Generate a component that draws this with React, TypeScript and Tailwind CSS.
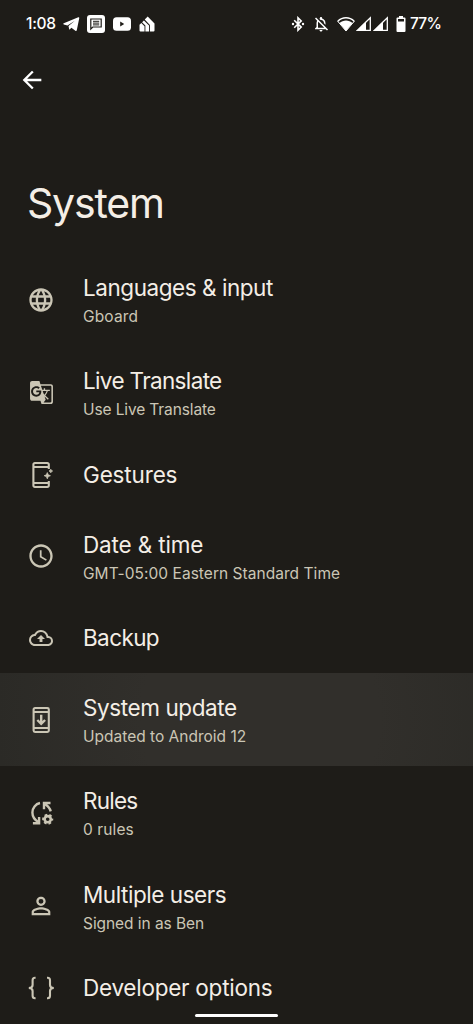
import type { ReactNode } from "react"
import {
  MdAccessTime,
  MdArrowBack,
  MdGTranslate,
  MdLanguage,
  MdOutlineBackup,
  MdOutlineNotificationsOff,
  MdPersonOutline,
} from "react-icons/md"

interface Item {
  title: string
  sub?: string
  icon: ReactNode
  active?: boolean
  titleClass?: string
  subClass?: string
}

function GesturesIcon() {
  return (
    <svg width="28" height="28" viewBox="0 0 28 28" fill="none" stroke="currentColor" strokeWidth="2.1">
      <path d="M21.8 8V3.4a1.4 1.4 0 0 0-1.4-1.4H7.8a1.4 1.4 0 0 0-1.4 1.4v21.2a1.4 1.4 0 0 0 1.4 1.4h12.6a1.4 1.4 0 0 0 1.4-1.4V20" />
      <path d="M6.5 6h15.3M6.5 22h15.3" />
      <path
        d="M20.3 11.6l.9 2.2 2.2.9-2.2.9-.9 2.2-.9-2.2-2.2-.9 2.2-.9zM23.8 8.2l.5 1.3 1.3.5-1.3.5-.5 1.3-.5-1.3-1.3-.5 1.3-.5z"
        fill="currentColor"
        strokeWidth=".8"
      />
    </svg>
  )
}

function UpdateIcon() {
  return (
    <svg width="28" height="28" viewBox="0 0 28 28" fill="none" stroke="currentColor" strokeWidth="2.1">
      <rect x="6.6" y="2" width="15.2" height="24" rx="1.4" />
      <path d="M6.5 6h15.3M6.5 22h15.3" />
      <path d="M14.2 8.8v9M10.3 14l3.9 3.9 3.9-3.9" strokeWidth="2.4" />
    </svg>
  )
}

function RulesIcon() {
  return (
    <svg width="28" height="28" viewBox="0 0 28 28" fill="none" stroke="currentColor" strokeWidth="2.4">
      <path d="M13 4C8.6 5 5.400 8.900 5.400 13.400c0 4.100 2.400 7.500 6 9.600" />
      <path d="M5.900 24.300h6.200V18" />
      <path d="M23.700 12.400c-.8-3.200-2.900-5.700-5.900-7.300" />
      <path d="M23.500 4h-6.500v6.200" />
      <circle cx="20.7" cy="20.2" r="3.1" strokeWidth="2.6" />
      <circle cx="20.7" cy="20.2" r="4.6" strokeWidth="1.9" strokeDasharray="2.6 2.217" strokeDashoffset="1.3" />
    </svg>
  )
}

function BracesIcon() {
  return (
    <svg width="28" height="28" viewBox="0 0 28 28" fill="none" stroke="currentColor" strokeWidth="2.1" className="overflow-visible">
      <path d="M8.600 3.800H8Q5.600 3.800 5.600 6.300V11Q5.600 14 1.800 14Q5.600 14 5.600 17V21.700Q5.600 24.200 8 24.200H8.600" />
      <path d="M20 3.800H20.600Q23 3.800 23 6.300V11Q23 14 26.800 14Q23 14 23 17V21.700Q23 24.200 20.600 24.200H20" />
    </svg>
  )
}

const items: Item[] = [
  {
    title: "Languages & input",
    sub: "Gboard",
    icon: <MdLanguage size={28} />,
    titleClass: "tracking-[-0.45px]",
    subClass: "tracking-[0.15px]",
  },
  {
    title: "Live Translate",
    sub: "Use Live Translate",
    icon: <MdGTranslate size={25} />,
    titleClass: "tracking-[-0.65px]",
    subClass: "tracking-[-0.12px]",
  },
  { title: "Gestures", icon: <GesturesIcon />, titleClass: "tracking-[-0.15px]" },
  {
    title: "Date & time",
    sub: "GMT-05:00 Eastern Standard Time",
    icon: <MdAccessTime size={28} />,
    titleClass: "tracking-[-0.15px]",
    subClass: "tracking-[0.04px]",
  },
  { title: "Backup", icon: <MdOutlineBackup size={24} />, titleClass: "tracking-[-0.6px]" },
  {
    title: "System update",
    sub: "Updated to Android 12",
    icon: <UpdateIcon />,
    active: true,
    titleClass: "tracking-[-0.4px]",
  },
  {
    title: "Rules",
    sub: "0 rules",
    icon: <RulesIcon />,
    titleClass: "tracking-[-0.75px]",
    subClass: "tracking-[0.1px]",
  },
  {
    title: "Multiple users",
    sub: "Signed in as Ben",
    icon: <MdPersonOutline size={28} />,
    titleClass: "tracking-[-0.45px]",
    subClass: "tracking-[-0.06px]",
  },
  { title: "Developer options", icon: <BracesIcon />, titleClass: "tracking-[-0.25px]" },
]

function Signal() {
  return (
    <svg width="16" height="16" viewBox="0 0 16 16" className="shrink-0">
      <path d="M1.5 14.3L14.3 1.8v12.5z" fill="none" stroke="white" strokeWidth="1.3" />
      <path d="M.5 15L10 5.5V15z" fill="white" />
    </svg>
  )
}

function StatusBar() {
  return (
    <div className="flex h-12 shrink-0 items-center justify-between pl-[26px] pr-[33px] text-white">
      <div className="flex items-center">
        <span className="w-[37px] whitespace-nowrap text-[15.5px] font-medium tracking-[-0.3px]">1:08</span>
        {/* telegram */}
        <svg width="17" height="18" viewBox="0 0 18 18" fill="white">
          <path d="M.8 8.300L16.200 1.900c.7-.3 1.200.1 1 .9l-2.600 12.800c-.2.800-.8 1-1.500.6l-4.200-3.100-2.200 2.100-.9-4L12.600 5.500 4.700 10.600.8 9.400c-.7-.3-.7-.8 0-1.100z" />
        </svg>
        {/* messages */}
        <svg width="18" height="18" viewBox="0 0 18 18" className="ml-[7px]">
          <rect width="18" height="18" rx="3" fill="white" />
          <path d="M3.800 14V4h10.400v8H5.800z" fill="none" stroke="#1e1c18" strokeWidth="1.200" />
          <path d="M6 6.300h6.200M6 8.100h6.200M6 9.900h6.200" stroke="#1e1c18" strokeWidth="1" />
        </svg>
        {/* youtube */}
        <svg width="18" height="18" viewBox="0 0 18 18" className="ml-[8px]">
          <rect y="2.3" width="18" height="13.4" rx="3.5" fill="white" />
          <path d="M7.200 6.600l4 2.400-4 2.400z" fill="#1e1c18" />
        </svg>
        {/* layered house */}
        <svg width="16" height="18" viewBox="0 0 16 18" className="ml-[8px]">
          <path
            d="M.5 9.800L2.300 8l3.200 3.300v5.200h-4a1 1 0 0 1-1-1zM3.100 7.200L4.900 5.400l5.100 5v6.100H6.400v-5.900zM5.700 4.600L8.700 1.500l6.800 7v7a1 1 0 0 1-1 1h-3.600V9.900z"
            fill="white"
          />
        </svg>
      </div>
      <div className="flex items-center">
        {/* bluetooth, connected */}
        <svg width="14" height="16" viewBox="0 0 14 16">
          <path d="M3.200 4.300l7 6.800L7 14.200V1.800l3.200 3.100-7 6.800" fill="none" stroke="white" strokeWidth="1.6" />
          <circle cx="2" cy="8" r="1.2" fill="white" />
          <circle cx="12" cy="8" r="1.2" fill="white" />
        </svg>
        <MdOutlineNotificationsOff size={18} className="ml-[7px]" />
        <svg width="18" height="16" viewBox="0 0 18 16" className="ml-[7px]">
          <path d="M.8 5.300C5.500.7 12.500.7 17.200 5.300" fill="none" stroke="white" strokeWidth="1.500" />
          <path d="M2.500 7.100C6 3.700 12 3.700 15.500 7.100L9 15z" fill="white" />
          <path d="M.5 5L9 15l8.500-10" fill="none" stroke="white" strokeWidth="1" />
        </svg>
        <div className="ml-[1px] flex gap-[1px]">
          <Signal />
          <Signal />
        </div>
        <svg width="10" height="16" viewBox="0 0 10 16" className="ml-[7px]">
          <path d="M3 0h4v1.500h1.500a1 1 0 0 1 1 1V15a1 1 0 0 1-1 1h-7a1 1 0 0 1-1-1V2.500a1 1 0 0 1 1-1H3z" fill="white" />
          <path d="M2 3h6v2.500H2z" fill="#1e1c18" />
        </svg>
        <span className="ml-[4px] w-[30px] whitespace-nowrap text-[15.5px] font-medium tracking-[-0.8px]">77%</span>
      </div>
    </div>
  )
}

function Row({ item }: { item: Item }) {
  return (
    <button
      className={
        "flex w-full shrink-0 items-center pl-[27px] text-left " +
        (item.sub ? "h-[93.3px] " : "h-[70px] ") +
        (item.active ? "bg-[radial-gradient(circle_at_55%_50%,#312f2b_45%,#2b2a26_100%)]" : "")
      }
    >
      <span className="mr-[27.5px] flex w-[28.5px] shrink-0 justify-center text-[#cbc6b5]">{item.icon}</span>
      <span className={"flex flex-col whitespace-nowrap " + (item.sub ? "pt-[5px]" : "")}>
        <span className={"text-[22.5px] leading-[30px] text-[#f4eee6] " + (item.titleClass ?? "")}>{item.title}</span>
        {item.sub && (
          <span className={"text-[15.5px] leading-[28px] text-[#cbc6b5] " + (item.subClass ?? "")}>{item.sub}</span>
        )}
      </span>
    </button>
  )
}

export default function App() {
  return (
    <div className="flex h-[1024px] w-[473px] flex-col overflow-hidden bg-[#1e1c18] font-['Inter',sans-serif]">
      <StatusBar />
      <div className="flex h-16 shrink-0 items-center pl-[18px] text-white">
        <MdArrowBack size={28} />
      </div>
      <h1 className="flex h-[141px] shrink-0 items-end pb-[22px] pl-[27px] text-[41px] leading-[56px] tracking-[-1.2px] text-[#f4eee6]">
        System
      </h1>
      <div className="flex h-[761px] shrink-0 flex-col overflow-hidden">
        {items.map(item => (
          <Row key={item.title} item={item} />
        ))}
      </div>
      <div className="mx-auto h-[3px] w-[83px] shrink-0 rounded-full bg-white" />
    </div>
  )
}
